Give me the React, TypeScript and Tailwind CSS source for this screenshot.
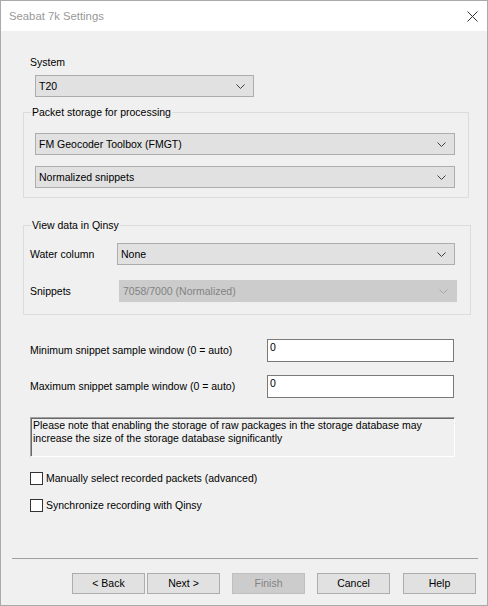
import React from 'react'

function Chevron({ color = '#404040' }: { color?: string }) {
    return (
        <svg width="9" height="5" viewBox="0 0 9 5" className="shrink-0">
            <polyline points="0.5,0.5 4.5,4.5 8.5,0.5" fill="none" stroke={color} strokeWidth="1" />
        </svg>
    )
}

function Combo({ value, className = '', disabled = false }: { value: string; className?: string; disabled?: boolean }) {
    return (
        <div
            className={
                'h-[22px] flex items-center justify-between pl-[3px] pr-[8px] border ' +
                (disabled ? 'bg-[#cccccc] border-[#cccccc] text-[#838383] ' : 'bg-[#e1e1e1] border-[#adadad] text-black ') +
                className
            }
        >
            <span>{value}</span>
            <Chevron color={disabled ? '#a6a6a6' : '#404040'} />
        </div>
    )
}

function Checkbox({ label, className = '' }: { label: string; className?: string }) {
    return (
        <div className={'flex items-center ml-[7px] ' + className}>
            <div className="w-[13px] h-[13px] border border-[#333] bg-white shrink-0" />
            <span className="ml-[3px]">{label}</span>
        </div>
    )
}

function Button({ label, className = '', disabled = false }: { label: string; className?: string; disabled?: boolean }) {
    return (
        <div
            className={
                'w-[73px] h-[21px] flex items-center justify-center border shrink-0 ' +
                (disabled ? 'bg-[#cccccc] border-[#bfbfbf] text-[#838383] ' : 'bg-[#e1e1e1] border-[#adadad] text-black ') +
                className
            }
        >
            {label}
        </div>
    )
}

export default function App() {
    return (
        <div className="w-[488px] h-[606px] border border-[#aaaaaa] bg-[#f0f0f0] flex flex-col font-['Liberation_Sans',Arial,sans-serif] text-[10.5px] leading-[13px] text-black">
            {/* Title bar */}
            <div className="h-[30px] bg-white flex items-center justify-between pl-[8px] pr-[9px] shrink-0">
                <span className="text-[11.3px] text-[#999999]">Seabat 7k Settings</span>
                <svg width="11" height="11" viewBox="0 0 11 11">
                    <path d="M0.5 0.5 L10.5 10.5 M10.5 0.5 L0.5 10.5" stroke="#333" strokeWidth="1" />
                </svg>
            </div>

            {/* Body */}
            <div className="flex flex-col pl-[22px] pr-[18px]">
                <div className="ml-[7px] mt-[25px]">System</div>
                <Combo value="T20" className="ml-[12px] mt-[6px] w-[219px]" />

                <fieldset className="mt-[9px] border border-[#dcdcdc] pl-[11px] pr-[13px] pb-[9px]">
                    <legend className="ml-[-4px] px-[1px]">Packet storage for processing</legend>
                    <Combo value="FM Geocoder Toolbox (FMGT)" className="mt-[14px]" />
                    <Combo value="Normalized snippets" className="mt-[11px]" />
                </fieldset>

                <fieldset className="mt-[21px] border border-[#dcdcdc] pl-[6px] pr-[13px] pb-[12px]">
                    <legend className="ml-[1px] px-[1px]">View data in Qinsy</legend>
                    <div className="flex items-center mt-[11px]">
                        <span className="w-[87px] shrink-0">Water column</span>
                        <Combo value="None" className="w-[338px] shrink-0" />
                    </div>
                    <div className="flex items-center mt-[15px]">
                        <span className="w-[89px] shrink-0">Snippets</span>
                        <Combo value="7058/7000 (Normalized)" className="w-[338px] shrink-0" disabled />
                    </div>
                </fieldset>

                <div className="flex items-center mt-[24px] ml-[7px]">
                    <span className="w-[237px] shrink-0">Minimum snippet sample window (0 = auto)</span>
                    <div className="w-[187px] h-[23px] bg-white border border-[#7a7a7a] pl-[2px] pt-[1px]">0</div>
                </div>
                <div className="flex items-center mt-[13px] ml-[7px]">
                    <span className="w-[237px] shrink-0">Maximum snippet sample window (0 = auto)</span>
                    <div className="w-[187px] h-[23px] bg-white border border-[#7a7a7a] pl-[2px] pt-[1px]">0</div>
                </div>

                <div className="mt-[19px] ml-[7px] w-[425px] h-[40px] border border-t-[#a0a0a0] border-l-[#a0a0a0] border-r-white border-b-white shadow-[inset_1px_1px_0_#696969] pl-[2px] pt-[1px]">
                    Please note that enabling the storage of raw packages in the storage database may increase the size of the storage database significantly
                </div>

                <Checkbox label="Manually select recorded packets (advanced)" className="mt-[15px]" />
                <Checkbox label="Synchronize recording with Qinsy" className="mt-[14px]" />
            </div>

            <div className="flex-1" />

            {/* Footer */}
            <div className="shrink-0 pb-[11px]">
                <div className="ml-[11px] w-[466px] h-px bg-[#a0a0a0]" />
                <div className="flex mt-[14px]">
                    <Button label="< Back" className="ml-[71px]" />
                    <Button label="Next >" className="ml-[2px]" />
                    <Button label="Finish" className="ml-[12px]" disabled />
                    <Button label="Cancel" className="ml-[12px]" />
                    <Button label="Help" className="ml-[13px]" />
                </div>
            </div>
        </div>
    )
}
